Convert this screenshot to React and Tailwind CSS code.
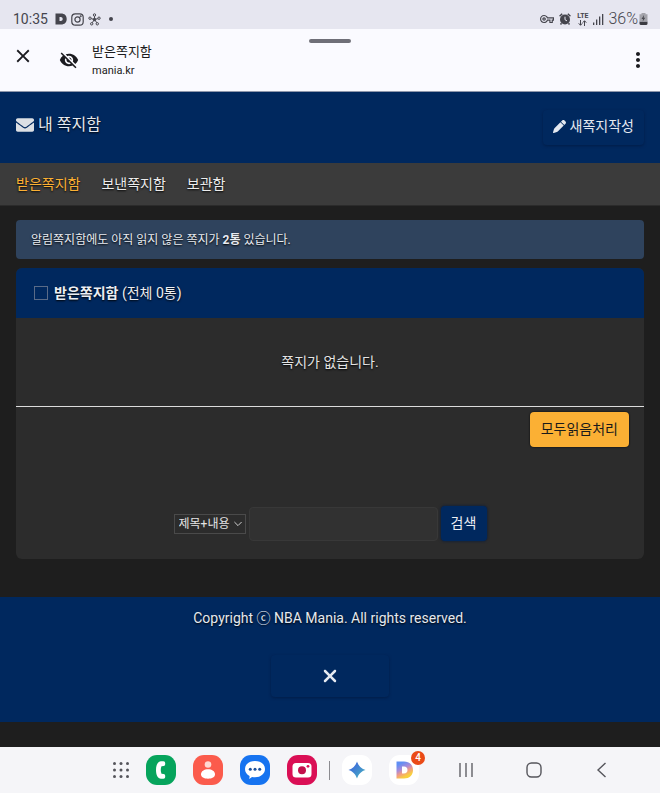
import React, { useState } from "react";

import { FaEnvelope } from "react-icons/fa";

import { FaPen, FaXmark } from "react-icons/fa6";

import {
  MdClose,
  MdMoreVert,
  MdOutlineVpnKey,
  MdVisibilityOff,
} from "react-icons/md";

const tabs = ["받은쪽지함", "보낸쪽지함", "보관함"];

function StatusBar() {
  return (
    <div
      className="
        flex items-end justify-between
        h-[29px] pl-[13px] pr-3 pb-[1px]
        bg-[#e6e6f0] text-[#45454d]
      "
    >
      <div className="flex items-center h-[18px] gap-1">
        <span className="w-[38px] text-[14px] leading-[18px]">10:35</span>

        <svg className="w-3 h-3" viewBox="0 0 12 12" fill="currentColor">
          <path
            fillRule="evenodd"
            d="M.5.5h5.500C9.700.5 11.700 2.700 11.700 6S9.700 11.500 6 11.500H.5zM4.500 4v4h1.200c1.200 0 2-.7 2-2s-.8-2-2-2z"
          />
        </svg>

        <svg
          className="w-[13px] h-[13px]"
          viewBox="0 0 13 13"
          fill="none"
          stroke="currentColor"
          strokeWidth="1.200"
        >
          <rect x="0.800" y="0.800" width="11.400" height="11.400" rx="3.500" />
          <circle cx="6.500" cy="6.500" r="2.600" />
          <circle cx="9.700" cy="3.300" r="0.400" />
        </svg>

        <svg
          className="w-[13px] h-[13px]"
          viewBox="0 0 13 13"
          fill="none"
          stroke="currentColor"
          strokeWidth="1"
        >
          <path d="M6.500 6.500V3M6.500 6.500L2.700 5.500M6.500 6.500l3.800-1M6.500 6.500L4 10M6.500 6.500L9 10" />
          <circle cx="6.500" cy="2" r="1.200" fill="#e6e6f0" />
          <circle cx="2" cy="5.200" r="1.200" fill="#e6e6f0" />
          <circle cx="11" cy="5.200" r="1.200" fill="#e6e6f0" />
          <circle cx="3.700" cy="10.800" r="1.200" fill="#e6e6f0" />
          <circle cx="9.300" cy="10.800" r="1.200" fill="#e6e6f0" />
          <circle cx="6.500" cy="6.500" r="1.200" fill="currentColor" />
        </svg>

        <span className="w-1 h-1 ml-1 rounded-full bg-current" />
      </div>

      <div className="flex items-center h-[18px] gap-1">
        <MdOutlineVpnKey className="w-[14px] h-[14px]" />

        <svg className="w-3 h-3 ml-[1px]" viewBox="0 0 12 12" fill="none">
          <circle cx="6" cy="6.500" r="5" fill="currentColor" />
          <path
            d="M.6 3.200L3.200.8M11.400 3.200L8.800.8M2.500 10.200l-1 1.300M9.500 10.200l1 1.300"
            stroke="currentColor"
            strokeWidth="1.500"
          />
          <path d="M6 3.700v3l2 1.200" stroke="#e6e6f0" strokeWidth="1" />
        </svg>

        <div className="flex flex-col items-center w-[13px] ml-[1px]">
          <span className="text-[7px] leading-[7px] font-bold">LTE</span>
          <svg
            className="w-[9px] h-[6px]"
            viewBox="0 0 9 6"
            fill="none"
            stroke="currentColor"
            strokeWidth="1"
          >
            <path d="M2.500 0v5M.7 3.300l1.800 2 1.800-2M6.500 6V1M4.700 2.700l1.800-2 1.800 2" />
          </svg>
        </div>

        <svg className="w-[11px] h-3" viewBox="0 0 11 12" fill="currentColor">
          <path d="M0 9.500h1.300V12H0zM3 6.500h1.300V12H3zM6 3.500h1.300V12H6zM9 1h1.300v11H9z" />
        </svg>

        <div className="flex items-center gap-[1px]">
          <span className="text-[16px] leading-[18px] font-light">36%</span>
          <svg className="w-[9px] h-3" viewBox="0 0 9 12">
            <path d="M2.500 0h4v1.200H8.500V7h-8V1.200h2z" fill="#a3a3aa" />
            <path d="M.5 8.500h8v2q0 1.500-1.500 1.500H2Q.5 12 .5 10.500z" fill="#3b3b42" />
            <path d="M.5 7h8v1.500h-8z" fill="#a3a3aa" />
            <path d="M5 2L2.500 6h1.500L3.700 8.500l2.600-3.700H4.800z" fill="#4b4b52" />
          </svg>
        </div>
      </div>
    </div>
  );
}

function BrowserBar() {
  return (
    <header
      className="
        relative flex items-center
        h-[63px] px-3
        bg-[#fafaff] border-b border-[#8e97ab]
        text-[#1b1b20]
      "
    >
      <span
        className="
          absolute top-[10px] left-1/2 -translate-x-1/2
          w-[42px] h-[4px] rounded-full bg-[#6f6f78]
        "
      />

      <button type="button" aria-label="닫기" className="mb-2">
        <MdClose className="w-[22px] h-[22px]" />
      </button>

      <MdVisibilityOff className="w-5 h-5 ml-[25px]" />

      <div className="ml-[13px] pt-[2px]">
        <p className="text-[13px] leading-5">받은쪽지함</p>
        <p className="text-[11px] leading-[18px]">mania.kr</p>
      </div>

      <button type="button" aria-label="메뉴" className="ml-auto -mr-1">
        <MdMoreVert className="w-7 h-6" />
      </button>
    </header>
  );
}

function MessageBox() {
  const [checked, setChecked] = useState(false);

  return (
    <main className="px-4 pt-[14px] pb-[38px]">
      <p
        className="
          px-[15px] pt-[9px] pb-[7px]
          rounded bg-[#2f435d]
          text-[12px] leading-[23px] text-[#e8ecf2]
          text-shadow-[0_1px_2px_#000]
        "
      >
        알림쪽지함에도 아직 읽지 않은 쪽지가 <b>2통</b> 있습니다.
      </p>

      <section className="mt-[9px] rounded-md overflow-hidden bg-[#2c2c2c]">
        <label
          className="
            flex items-center gap-[6px]
            h-[50px] pl-[18px]
            bg-[#00285e]
            text-[14px] leading-5 text-[#eceff4]
            text-shadow-[0_1px_2px_#000]
          "
        >
          <input
            type="checkbox"
            checked={checked}
            onChange={(e) => setChecked(e.target.checked)}
            className="
              appearance-none
              w-[14px] h-[14px]
              border border-[#5a6b87]
              checked:bg-[#fbb034]
            "
          />
          <span>
            <b>받은쪽지함</b> (전체 0통)
          </span>
        </label>

        <p
          className="
            py-8
            border-b border-[#dcdcdc]
            text-center text-[14px] leading-6 text-[#e4e4e4]
            text-shadow-[0_1px_2px_#000]
          "
        >
          쪽지가 없습니다.
        </p>

        <div className="flex justify-end pt-[5px] pr-[15px]">
          <button
            type="button"
            className="
              h-[35px] px-[11px] pb-[2px]
              rounded bg-[#fbb034]
              text-[14px] leading-5 text-[#1a1a1a]
              shadow-[0_0_2px_#000]
            "
          >
            모두읽음처리
          </button>
        </div>

        <form
          onSubmit={(e) => e.preventDefault()}
          className="flex items-center justify-center gap-[3px] pt-[59px] pb-[18px]"
        >
          <div className="relative">
            <select
              aria-label="검색 조건"
              className="
                block appearance-none
                w-[72px] h-5 pl-1
                border border-[#4a4a4a]
                bg-transparent
                text-[12px] leading-4 text-[#e4e4e4]
              "
            >
              <option>제목+내용</option>
            </select>
            <svg
              className="absolute right-1 top-[7px] w-2 h-[6px] pointer-events-none"
              viewBox="0 0 8 6"
              fill="none"
              stroke="#d0d0d0"
            >
              <path d="M.4 1L4 4.600 7.600 1" />
            </svg>
          </div>

          <input
            type="text"
            aria-label="검색어"
            className="
              w-[189px] h-[34px] px-2
              rounded border border-[#383838]
              bg-[#313131]
              text-[14px] text-[#e4e4e4]
            "
          />

          <button
            type="submit"
            className="
              w-[46px] h-[35px] pb-[2px]
              rounded bg-[#00285e]
              text-[14px] leading-5 text-[#eceff4]
              shadow-[0_0_3px_#001a40]
            "
          >
            검색
          </button>
        </form>
      </section>
    </main>
  );
}

function Footer() {
  return (
    <footer
      className="
        flex flex-col items-center
        pt-[10px] pb-[25px]
        bg-[#00285e] text-[#e4e9f0]
      "
    >
      <p className="text-[14px] leading-[22px] text-shadow-[0_1px_2px_#000]">
        Copyright ⓒ NBA Mania. All rights reserved.
      </p>

      <button
        type="button"
        aria-label="닫기"
        className="
          flex items-center justify-center
          w-[118px] h-[42px] mt-[26px]
          rounded shadow-[0_1px_3px_#001d48]
        "
      >
        <FaXmark className="w-5 h-5" />
      </button>
    </footer>
  );
}

function Dock() {
  return (
    <nav
      className="
        flex items-center
        h-[46px] mt-[25px] pl-[112px]
        bg-[#f5f5f8]
      "
    >
      <button type="button" aria-label="앱 목록" className="w-[18px]">
        <svg className="w-[18px] h-[18px]" viewBox="0 0 18 18" fill="#55555b">
          {[2.5, 9, 15.5].map((y) =>
            [2.5, 9, 15.5].map((x) => (
              <circle key={`${x}-${y}`} cx={x} cy={y} r="1.500" />
            ))
          )}
        </svg>
      </button>

      <div className="flex items-center gap-[17px] ml-4">
        <button type="button" aria-label="전화">
          <svg className="block w-[30px] h-[30px]" viewBox="0 0 30 30">
            <rect width="30" height="30" rx="11" fill="#06a45c" />
            <path
              d="M10 15c0-5 1.800-8.500 5-8.800h2.500q1.700 0 1.700 1.700v1.400q0 1.500-1.500 1.700l-2.200.3c-1 2.500-1 4.900 0 7.400l2.200.3q1.500.2 1.500 1.700v1.400q0 1.700-1.700 1.700H15C11.800 23.500 10 20 10 15z"
              fill="#fff"
            />
          </svg>
        </button>

        <button type="button" aria-label="연락처">
          <svg className="block w-[30px] h-[30px]" viewBox="0 0 30 30">
            <rect width="30" height="30" rx="11" fill="#fb5b4c" />
            <circle cx="15" cy="9.500" r="3.300" fill="#ffd9d2" />
            <path
              d="M8 19.300c0-3 3.200-5 7-5s7 2 7 5-3 4.400-7 4.400-7-1.400-7-4.400z"
              fill="#fff"
            />
          </svg>
        </button>

        <button type="button" aria-label="메시지">
          <svg className="block w-[30px] h-[30px]" viewBox="0 0 30 30">
            <rect width="30" height="30" rx="11" fill="#1673f0" />
            <path
              d="M15 6c6 0 10 3.500 10 8s-4 8.300-10 8.300c-1 0-2-.1-3-.3L9.300 24l.3-3C6.700 19.600 5 17 5 14c0-4.500 4-8 10-8z"
              fill="#fff"
            />
            <g fill="#1b4f9c">
              <circle cx="10.300" cy="14.200" r="1.500" />
              <circle cx="15" cy="14.200" r="1.500" />
              <circle cx="19.700" cy="14.200" r="1.500" />
            </g>
          </svg>
        </button>

        <button type="button" aria-label="카메라">
          <svg className="block w-[30px] h-[30px]" viewBox="0 0 30 30">
            <rect width="30" height="30" rx="11" fill="#da0f55" />
            <rect x="5.500" y="8" width="19" height="14.500" rx="3.500" fill="#fff" />
            <circle cx="15" cy="15.200" r="4" fill="#c3104c" />
            <circle cx="21" cy="11.300" r="1.400" fill="#da0f55" />
          </svg>
        </button>
      </div>

      <span className="w-[1px] h-[19px] ml-3 bg-[#8b8b90]" />

      <div className="flex items-center gap-[17px] ml-3">
        <button type="button" aria-label="어시스턴트">
          <svg className="block w-[30px] h-[30px]" viewBox="0 0 30 30">
            <defs>
              <linearGradient id="star" x1="0" y1="0" x2="1" y2="1">
                <stop offset="0.300" stopColor="#3f74d8" />
                <stop offset="0.800" stopColor="#46a6c4" />
              </linearGradient>
            </defs>
            <rect width="30" height="30" rx="11" fill="#fff" />
            <path
              d="M15 6.500c1.500 4.500 4 7 8.500 8.500-4.500 1.500-7 4-8.500 8.500-1.500-4.500-4-7-8.500-8.500 4.500-1.500 7-4 8.500-8.500z"
              fill="url(#star)"
            />
          </svg>
        </button>

        <button type="button" aria-label="다음" className="relative">
          <svg className="block w-[30px] h-[30px]" viewBox="0 0 30 30">
            <defs>
              <linearGradient id="mark" x1="0.200" y1="0" x2="0.700" y2="1">
                <stop offset="0.100" stopColor="#5f8ff5" />
                <stop offset="0.400" stopColor="#a98bd8" />
                <stop offset="0.600" stopColor="#f29a86" />
                <stop offset="0.850" stopColor="#f8cf3e" />
              </linearGradient>
            </defs>
            <rect width="30" height="30" rx="11" fill="#fff" />
            <path
              fillRule="evenodd"
              d="M7.500 6.500H15c5.500 0 9 3.200 9 8.500s-3.500 8.500-9 8.500H7.500zM13 11.500v7h2c2.200 0 3.500-1.300 3.500-3.500s-1.300-3.500-3.500-3.500z"
              fill="url(#mark)"
            />
          </svg>
          <span
            className="
              absolute -top-[4px] -right-[6px]
              w-[14px] h-[14px] rounded-full
              bg-[#ea4a17] text-white
              text-[10px] leading-[14px] font-medium text-center
            "
          >
            4
          </span>
        </button>
      </div>

      <div className="flex items-center justify-between w-[152px] ml-[39px]">
        <button type="button" aria-label="최근 앱">
          <svg
            className="block w-4 h-4"
            viewBox="0 0 16 16"
            stroke="#55555b"
            strokeWidth="1.300"
          >
            <path d="M2 1v14M8 1v14M14 1v14" />
          </svg>
        </button>
        <button type="button" aria-label="홈">
          <svg
            className="block w-4 h-4"
            viewBox="0 0 16 16"
            fill="none"
            stroke="#55555b"
            strokeWidth="1.400"
          >
            <rect x="1" y="1" width="14" height="14" rx="4.500" />
          </svg>
        </button>
        <button type="button" aria-label="뒤로">
          <svg
            className="block w-4 h-4"
            viewBox="0 0 16 16"
            fill="none"
            stroke="#55555b"
            strokeWidth="1.400"
          >
            <path d="M11.500 1L4 8l7.500 7" />
          </svg>
        </button>
      </div>
    </nav>
  );
}

function App() {
  const [active, setActive] = useState(0);

  return (
    <div className="min-h-screen bg-[#1e1e1e] font-['Roboto','Noto_Sans_CJK_KR',sans-serif]">
      <StatusBar />
      <BrowserBar />

      <div
        className="
          flex items-center justify-between
          h-[71px] px-4
          bg-[#00285e] text-[#e4e9f0]
          text-shadow-[0_1px_2px_#000]
        "
      >
        <h1 className="flex items-center gap-1 pb-[6px] text-[16px] leading-5">
          <FaEnvelope className="w-[18px] h-[18px] text-[#dcdfe4]" />
          내 쪽지함
        </h1>

        <button
          type="button"
          className="
            flex items-center gap-1
            h-[35px] px-[10px] pb-[3px]
            rounded shadow-[0_1px_3px_#001d48]
            text-[14px] leading-5
          "
        >
          <FaPen className="w-[13px] h-[13px]" />
          새쪽지작성
        </button>
      </div>

      <div
        className="
          flex items-center gap-[21px]
          h-[43px] px-4
          bg-[#3b3b3b] border-b border-[#2b2b2b]
          text-[14px] leading-5
          text-shadow-[0_1px_2px_#000]
        "
      >
        {tabs.map((tab, index) => (
          <a
            key={tab}
            href="#"
            onClick={() => setActive(index)}
            className={active === index ? "text-[#fbb034]" : "text-[#ececec]"}
          >
            {tab}
          </a>
        ))}
      </div>

      <MessageBox />
      <Footer />
      <Dock />
    </div>
  );
}

export default App;
